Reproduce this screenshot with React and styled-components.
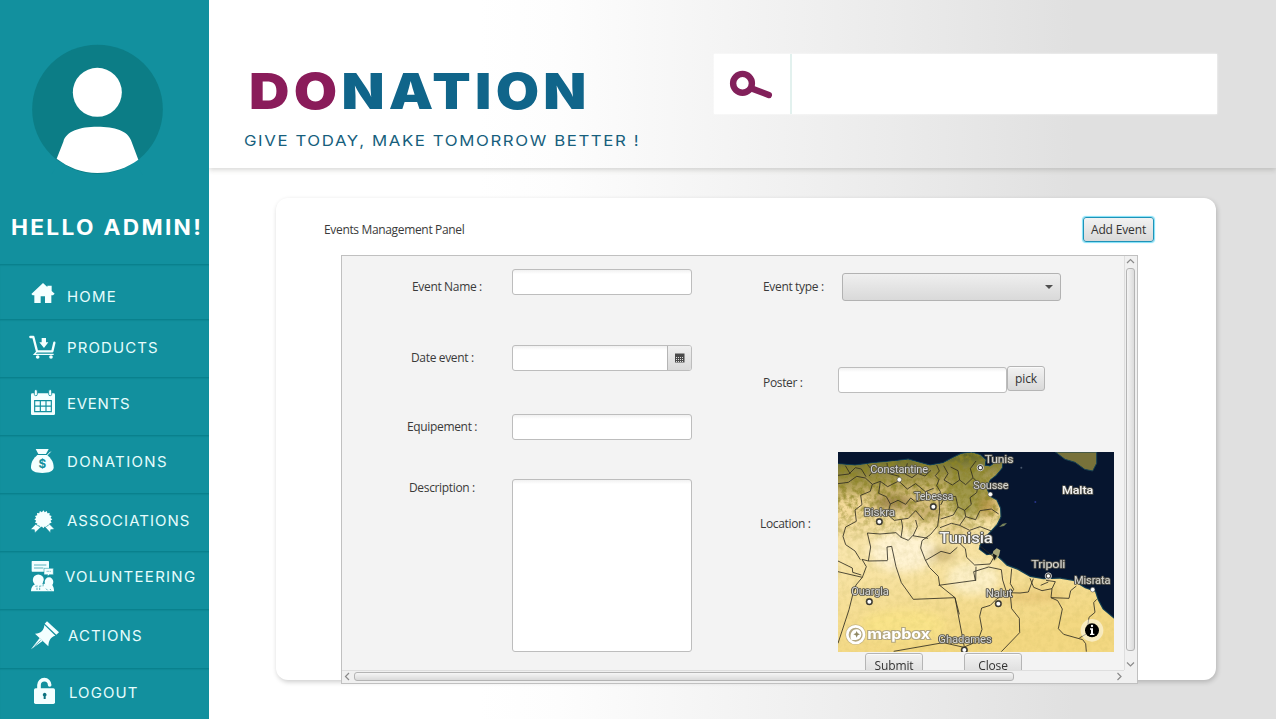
import React from "react";
import styled, { createGlobalStyle, css } from "styled-components";

const Global = createGlobalStyle`
  * { box-sizing: border-box; }
  body { margin: 0; overflow: hidden; background: #fff; }
`;

const brandFont = css`
  font-family: Inter, "Open Sans", sans-serif;
  transform-origin: 0 50%;
`;
const formFont = css`
  font-family: "Open Sans", "Noto Sans", sans-serif;
  font-size: 12px;
  letter-spacing: -0.34px;
  color: #3a3a3a;
`;

const Page = styled.div`
  display: flex;
  width: 1276px;
  height: 719px;
  overflow: hidden;
`;

/* ---------- sidebar ---------- */
const Sidebar = styled.aside`
  position: relative;
  z-index: 1;
  display: flex;
  flex-direction: column;
  flex: none;
  width: 209px;
  background: #12909e;
`;
const Profile = styled.div`
  display: flex;
  flex-direction: column;
  height: 264px;
  padding: 44px 0 0 31px;
`;
const Greeting = styled.h2`
  ${brandFont}
  width: 170px;
  margin: 40px 0 0 -20px;
  font-size: 21px;
  line-height: 26px;
  font-weight: 700;
  letter-spacing: 2.15px;
  transform: scaleX(1.08);
  color: #fff;
  white-space: nowrap;
`;
const NavItem = styled.a`
  display: flex;
  align-items: flex-start;
  flex: none;
  height: ${(p) => p.$height}px;
  box-shadow: inset 0 2px 1px -0.5px #0a818d;
  & > svg {
    flex: none;
    margin: ${(p) => p.$iconTop}px 0 0 ${(p) => p.$iconLeft}px;
  }
`;
const NavLabel = styled.span`
  ${brandFont}
  flex: none;
  margin: ${(p) => p.$top}px 0 0 ${(p) => p.$left}px;
  font-size: 14px;
  line-height: 18px;
  letter-spacing: ${(p) => p.$spacing}px;
  transform: scaleX(1.07);
  color: #e6fdfd;
  white-space: nowrap;
`;

/* ---------- main area ---------- */
const Main = styled.main`
  display: flex;
  flex-direction: column;
  flex: 1;
  background: linear-gradient(90deg, #fff 0, #fff 270px, #fdfdfd 350px, #f8f8f8 442px, #f0f0f0 592px, #e8e8e8 735px, #e0e0e0 865px);
`;
const Header = styled.header`
  display: flex;
  align-items: flex-start;
  flex: none;
  height: 168px;
  box-shadow: 0 2px 5px rgba(60, 60, 50, 0.2);
`;
const Brand = styled.div`
  ${brandFont}
  width: 505px;
  padding: 60px 0 0 35px;
  white-space: nowrap;
`;
const Title = styled.h1`
  width: 320px;
  margin: 0 0 0 5px;
  font-size: 50px;
  line-height: 62px;
  font-weight: 900;
  letter-spacing: 3.8px;
  transform: scaleX(1.12);
  transform-origin: 0 50%;
  color: #10658a;
  & > span { color: #8a1c5a; }
`;
const Tagline = styled.p`
  width: 360px;
  margin: 9px 0 0;
  font-size: 15px;
  line-height: 20px;
  letter-spacing: 1.42px;
  transform: scaleX(1.12);
  transform-origin: 0 50%;
  color: #175f7d;
`;
const Search = styled.div`
  display: flex;
  width: 503px;
  height: 60px;
  margin-top: 54px;
  background: #fff;
  box-shadow: 0 0 2px rgba(255, 255, 255, 0.9);
`;
const SearchButton = styled.div`
  width: 78px;
  height: 60px;
  padding: 15px 0 0 15px;
  border-right: 2px solid #e2f1ee;
`;

const Card = styled.section`
  display: flex;
  flex-direction: column;
  width: 940px;
  height: 482px;
  margin: 30px 0 0 67px;
  border-radius: 12px;
  background: #fff;
  box-shadow: 1px 2px 5px rgba(0, 0, 0, 0.2);
`;
const CardHeader = styled.div`
  ${formFont}
  display: flex;
  justify-content: space-between;
  align-items: center;
  flex: none;
  height: 57px;
  padding: 6px 62px 0 48px;
`;
const Button = styled.button`
  ${formFont}
  display: flex;
  align-items: center;
  justify-content: center;
  flex: none;
  width: ${(p) => p.$width}px;
  height: 25px;
  margin: 0;
  padding: 0;
  border: 1px solid ${(p) => (p.$focused ? "#1f93b8" : "#b5b5b5")};
  border-radius: 3px;
  background: linear-gradient(#f2f2f2, #d9d9d9);
  box-shadow: ${(p) => (p.$focused ? "0 0 1px 1px #7fe0f8" : "inset 0 1px 0 #fafafa")};
  letter-spacing: -0.15px;
  color: #333;
`;

/* ---------- scroll pane ---------- */
const ScrollPane = styled.div`
  display: grid;
  grid-template: 414px 13px / 782px 13px;
  flex: none;
  width: 797px;
  height: 429px;
  margin-left: 65px;
  border: 1px solid #c0c0c0;
  background: #f0f0f0;
`;
const Viewport = styled.div`
  ${formFont}
  display: flex;
  overflow: hidden;
  background: #f3f3f3;
`;
const VBar = styled.div`
  display: flex;
  flex-direction: column;
  align-items: center;
  border-left: 1px solid #dedede;
  padding: 2px 2px 3px 0;
`;
const VThumb = styled.div`
  width: 9px;
  height: 383px;
  margin: 4px 0 10px;
  border: 1px solid #b4b4b4;
  border-radius: 3px;
  background: linear-gradient(90deg, #f4f4f4, #dcdcdc);
`;
const HBar = styled.div`
  display: flex;
  align-items: center;
  border-top: 1px solid #dedede;
  padding: 0 0 2px 2px;
  & > * { flex: none; }
`;
const HThumb = styled.div`
  width: 660px;
  height: 9px;
  margin: 0 102px 0 4px;
  border: 1px solid #b4b4b4;
  border-radius: 3px;
  background: linear-gradient(#f6f6f6, #dadada);
`;

/* ---------- form ---------- */
const Column = styled.div`
  display: flex;
  flex-direction: column;
  flex: none;
  width: ${(p) => p.$width}px;
`;
const Row = styled.div`
  display: flex;
  align-items: flex-start;
  flex: none;
  height: ${(p) => p.$height}px;
  margin-top: ${(p) => p.$gap}px;
`;
const Label = styled.label`
  flex: none;
  width: ${(p) => p.$width}px;
  padding: ${(p) => p.$top}px 0 0 ${(p) => p.$indent}px;
  line-height: 16px;
  white-space: nowrap;
`;
const inputBox = css`
  border: 1px solid #bdbdbd;
  border-radius: 3px;
  background: linear-gradient(#f1f1f1 0, #fff 4px);
`;
const TextField = styled.div`
  ${inputBox}
  flex: none;
  width: ${(p) => p.$width || 180}px;
  height: ${(p) => p.$height || 26}px;
  margin-top: ${(p) => p.$top || 0}px;
`;
const DateField = styled.div`
  ${inputBox}
  display: flex;
  justify-content: flex-end;
  width: 180px;
  height: 26px;
`;
const DateButton = styled.div`
  display: flex;
  align-items: center;
  justify-content: center;
  width: 24px;
  border-left: 1px solid #b5b5b5;
  border-radius: 0 2px 2px 0;
  background: linear-gradient(#f0f0f0, #d9d9d9);
`;
const Combo = styled.div`
  display: flex;
  align-items: center;
  justify-content: flex-end;
  width: 219px;
  height: 28px;
  padding-right: 7px;
  border: 1px solid #b2b2b2;
  border-radius: 3px;
  background: linear-gradient(#efefef, #d9d9d9);
`;
const Actions = styled.div`
  display: flex;
  gap: 41px;
  margin: 1px 0 0 173px;
`;

/* ---------- icons ---------- */
const TEAL = "#12909e";
const W = "#f4ffff";

const Icon = ({ box, children }) => {
  const [, , w, h] = box.split(" ").map(Number);
  return (
    <svg viewBox={box} width={w / 3} height={h / 3} fill={W}>
      {children}
    </svg>
  );
};

const HomeIcon = () => (
  <Icon box="90 81 78 66">
    <path d="M94 117 L129 84 L142 96 V92 H155 V108 L164 116 L159 121 H154 V144 H135 V124 H122 V144 H103 V121 H98Z" />
  </Icon>
);
const CartIcon = () => (
  <Icon box="84 240 81 75">
    <path d="M88 246 H97 L108 289 H154 L160 263" fill="none" stroke={W} strokeWidth="7" strokeLinejoin="round" strokeLinecap="round" />
    <path d="M108 289 L100 298 H158" fill="none" stroke={W} strokeWidth="4" />
    <circle cx="110" cy="306" r="5.5" />
    <circle cx="150" cy="306" r="5.5" />
    <path d="M122 249 H135 V262 H142 L129 279 L115 262 H122Z" />
  </Icon>
);
const CalendarIcon = () => (
  <Icon box="90 402 78 81">
    <rect x="93" y="415" width="72" height="65" rx="4" />
    <g stroke={TEAL} strokeWidth="2.5">
      <rect x="103" y="404" width="9" height="18" rx="4" />
      <rect x="146" y="404" width="9" height="18" rx="4" />
      <path d="M104 437 H154 V470 H104Z M104 453.500 H154 M121 437 V470 M138 437 V470" fill="none" strokeWidth="3.500" />
    </g>
  </Icon>
);
const BagIcon = () => (
  <Icon box="90 579 75 78">
    <path d="M107 582 H146 L138 597 H115Z" />
    <path d="M112 600 H142 C151 609 161 619 161 637 C161 649 148 654 127 654 C106 654 93 649 93 637 C93 619 102 609 112 600Z" />
    <path d="M142 600 L152 590" stroke={W} strokeWidth="3" />
    <text x="127" y="640" fontFamily="Inter, sans-serif" fontSize="35" fontWeight="700" textAnchor="middle" fill={TEAL}>$</text>
  </Icon>
);
const burst = Array.from({ length: 32 }, (_, i) => {
  const r = i % 2 ? 22 : 27;
  const a = (i * Math.PI) / 16;
  return `${130 + r * Math.cos(a)},${103 + r * Math.sin(a)}`;
}).join(" ");
const BadgeIcon = () => (
  <Icon box="90 75 75 69">
    <polygon points={burst} />
    <path d="M107 118 L92 133 L103 134 L105 143 L122 127Z M149 118 L163 132 L152 134 L151 143 L136 127Z" stroke={TEAL} strokeWidth="1.500" />
  </Icon>
);
const VolunteerIcon = () => (
  <Icon box="90 225 75 96">
    <rect x="95" y="228" width="52" height="32" rx="2" />
    <path d="M102 240 H139 M102 249 H130" stroke={TEAL} strokeWidth="2" />
    <path d="M132 250 H160 V269 H148 L143 274 V269 H132Z" stroke={TEAL} strokeWidth="1.500" />
    <path d="M140 259 H152" stroke={TEAL} strokeWidth="2" strokeDasharray="3 2" />
    <path d="M93 319 C93 306 99 300 108 296 H152 C161 302 162 310 162 319Z" />
    <circle cx="115" cy="285" r="16.500" />
    <ellipse cx="147" cy="291" rx="13" ry="14" />
    <path d="M131 287 L129 304 M106 304 L113 303 M117 304 L124 303 M111 308 V315 M119 308 V315 M138 311 L143 316 M150 312 L153 316" stroke={TEAL} strokeWidth="2" fill="none" />
  </Icon>
);
const PinIcon = () => (
  <Icon box="90 405 90 90">
    <path d="M141 409 L177 442 L169 449 L134 416Z" />
    <path d="M133 420 L166 452 C151 456 146 467 145 484 L105 446 C123 445 132 436 133 420Z" />
    <path d="M119 459 L128 468 L93 493Z" />
    <path d="M122 466 L103 484" stroke={TEAL} strokeWidth="2" />
  </Icon>
);
const LockIcon = () => (
  <Icon box="99 576 69 84">
    <rect x="102" y="610" width="63" height="47" rx="5" />
    <path d="M117 612 V600 A16 16 0 0 1 149 600" fill="none" stroke={W} strokeWidth="11" strokeLinecap="round" />
    <path d="M134 623 a6 6 0 0 1 3 11 V642 H131 V634 a6 6 0 0 1 3 -11Z" fill="#0d7380" />
  </Icon>
);

const Avatar = () => (
  <svg width="133" height="131" viewBox="93 132 399 393">
    <ellipse cx="292.500" cy="328" rx="196" ry="194" fill="#0c7d86" />
    <path d="M180 484 C215 510 250 523 292 523 C340 523 375 508 405 484 L430 530 H150Z" fill="#12909e" />
    <circle cx="292" cy="277" r="73.500" fill="#fff" />
    <path d="M170 476 L190 425 C198 393 240 380 292 380 C344 380 384 393 393 421 L415 479 C380 504 340 519 292 519 C245 519 205 502 170 476Z" fill="#fff" />
  </svg>
);

const SearchIcon = () => (
  <svg width="45" height="32" viewBox="729 69 45 32" fill="none" stroke="#82205a">
    <circle cx="742.500" cy="83.300" r="9.400" strokeWidth="6.400" />
    <path d="M753 89 L768.800 95" strokeWidth="6.400" strokeLinecap="round" />
  </svg>
);

const paths = {
  up: "M1 5 L4.500 1.500 L8 5",
  down: "M1 1.500 L4.500 5 L8 1.500",
  left: "M5 1 L1.500 4.500 L5 8",
  right: "M1.500 1 L5 4.500 L1.500 8",
};
const Arrow = ({ dir }) => {
  const vertical = dir === "up" || dir === "down";
  return (
    <svg width={vertical ? 9 : 6} height={vertical ? 6 : 9} fill="none" stroke="#8a8a8a" strokeWidth="1.200">
      <path d={paths[dir]} />
    </svg>
  );
};

/* ---------- map ---------- */
const cities = [
  ["Tunis", 464, 53, 86, 33],
  ["Constantine", 121, 84, 173, 30],
  ["Sousse", 430, 131, 105, 30],
  ["Tebessa", 252, 166, 118, 30],
  ["Biskra", 101, 213, 94, 30],
  ["Malta", 696, 146, 93, 35],
  ["Tunisia", 328, 293, 160, 42],
  ["Tripoli", 604, 370, 102, 35],
  ["Misrata", 732, 416, 109, 30],
  ["Ouargla", 64, 450, 112, 30],
  ["Nalut", 467, 457, 80, 30],
  ["Ghadames", 325, 595, 160, 30],
];
const solidDots = [[208, 104], [481, 148], [788, 434]];
const ringDots = [[310, 185], [148, 230], [118, 470], [505, 476], [403, 615]];
const capitals = [[451, 68], [655, 393]];
const land =
  "M24 58 L75 62 L130 55 L195 49 L235 44 L262 52 L300 62 L340 55 L368 40 L395 27 L425 23 L450 31 L466 45 L463 62 L480 65 L500 51 L516 52 L515 68 L497 90 L479 104 L468 128 L478 155 L499 166 L510 190 L511 215 L500 238 L478 262 L458 283 L449 300 L446 313 L470 331 L493 328 L515 347 L530 362 L562 374 L600 396 L640 403 L690 401 L730 408 L765 430 L795 440 L803 465 L818 493 L852 521 V621 H24Z";
const borders = [
  "M320 60 L328 78 L316 92 L327 104 L320 122 L331 140 L327 164 L329 198 L323 243 L302 268 L276 287 L272 309 L286 345 L298 367 L325 394 L329 421 L375 458 L403 606",
  "M112 264 L150 267 L198 263 L213 277 L218 246 L214 224 M213 277 L235 286 L248 272 L294 280 M112 264 L122 306 L115 348 L173 347 M115 348 L96 343 L109 365 L97 397 L78 420 L68 450 L57 494 L24 595",
  "M185 304 L198 365 L214 413 L250 463 L375 458 M173 345 L171 306 L185 304",
  "M24 116 L55 112 L80 94 L106 99 L127 118 L151 109 L173 125 L206 108 L232 132 L257 116 L286 140 L311 130",
  "M24 91 L57 87 L76 68 L94 72 L108 95 M127 118 L121 139 L92 151 L96 179 L75 195 L79 229 L47 246 L39 274 L47 299 L75 318 L91 344",
  "M151 109 L146 145 L169 155 L181 177 L204 166 L227 178 L242 159 L257 171 L281 164 M181 177 L173 209 L193 226 L235 220 L257 197 L281 225 M257 225 L262 245 L249 273",
  "M24 380 L97 397 M24 348 L67 369 L68 382 L94 390",
  "M341 62 L354 86 L342 105 L367 120 L389 105 L407 119 L429 98 L421 71 L438 48 M389 105 L384 77 L362 66 M429 98 L446 115 L440 143 L420 158 L424 178 L404 196 L384 186 L377 154 L344 158 L332 180 M404 196 L407 215 L437 224 L450 197 L484 192 L506 207",
  "M384 186 L370 210 L332 222 M407 215 L389 241 L419 256 L450 245 L484 258 M389 241 L364 235 L330 248 M389 295 L406 311 L410 337 L434 360 L480 357 L492 336 L449 302",
  "M287 346 L333 319 L360 326 L382 307 M326 421 L436 406 L431 380 L476 366 L514 374 L518 405 L530 443 L570 444 L595 441 L610 401 M438 365 L437 408",
  "M545 371 L541 416 L551 433 L541 449 L545 491 L568 520 L569 563 L514 620",
  "M530 443 L500 462 L481 481 L455 489 L449 514 L456 553 L443 589 L405 605",
  "M600 400 L611 427 L636 437 L666 431 L676 410 L648 406 M666 431 L663 458 L717 460 L722 437 L739 423 M663 458 L683 467 L697 492 L685 551 L701 568 L758 584 L767 596 L769 620",
  "M800 463 L791 473 L795 502 L777 517 L773 543 L786 561 M748 579 L786 557 M632 421 L655 411",
  "M191 619 L340 593 L402 607 M375 458 L388 508",
  "M112 58 L129 79 L117 93 M232 55 L224 86 L246 98 L263 85 L285 93 L303 76 M46 62 L61 87 M171 54 L174 85 L208 94",
];

const MapView = () => (
  <svg width="276" height="200" viewBox="24 21 828 600">
    <defs>
      <linearGradient id="sand" x1="0" y1="0" x2="0.250" y2="1">
        <stop offset="0" stopColor="#8b8544" />
        <stop offset="0.130" stopColor="#b8a55d" />
        <stop offset="0.260" stopColor="#edd492" />
        <stop offset="0.480" stopColor="#f9e6ac" />
        <stop offset="1" stopColor="#f3d882" />
      </linearGradient>
      <linearGradient id="north" x1="0" y1="0" x2="0" y2="1">
        <stop offset="0" stopColor="#555f22" stopOpacity="0.950" />
        <stop offset="1" stopColor="#a8903f" stopOpacity="0" />
      </linearGradient>
      <filter id="soft" x="-40%" y="-40%" width="180%" height="180%"><feGaussianBlur stdDeviation="14" /></filter>
      <filter id="rough" x="0" y="0" width="100%" height="100%">
        <feTurbulence type="fractalNoise" baseFrequency="0.060" numOctaves="4" seed="4" />
        <feColorMatrix values="0 0 0 0 0.260  0 0 0 0 0.230  0 0 0 0 0.020  2.800 0 0 0 -1.100" />
      </filter>
      <linearGradient id="fade" x1="0" y1="0" x2="0" y2="1">
        <stop offset="0" stopColor="#fff" />
        <stop offset="0.280" stopColor="#aaa" />
        <stop offset="0.450" stopColor="#1c1c1c" />
        <stop offset="1" stopColor="#101010" />
      </linearGradient>
      <mask id="fadeMask"><rect x="24" y="21" width="828" height="600" fill="url(#fade)" /></mask>
      <clipPath id="landClip"><path d={land} /></clipPath>
    </defs>
    <rect x="24" y="21" width="828" height="600" fill="#06152f" />
    <path d="M676 21 H800 V55 L788 78 L764 73 L735 52 L705 43Z" fill="#78723a" stroke="#174153" strokeWidth="3" />
    <path d={land} fill="none" stroke="#1a5364" strokeWidth="7" opacity="0.700" />
    <path d={land} fill="url(#sand)" />
    <g clipPath="url(#landClip)">
      <rect x="24" y="21" width="500" height="165" fill="url(#north)" />
      <g filter="url(#soft)">
        <ellipse cx="190" cy="172" rx="60" ry="20" fill="#765b28" opacity="0.700" />
        <ellipse cx="290" cy="200" rx="55" ry="28" fill="#a58a48" opacity="0.550" />
        <ellipse cx="415" cy="145" rx="65" ry="75" fill="#8e8a3a" opacity="0.750" />
        <ellipse cx="60" cy="185" rx="65" ry="30" fill="#f6dc9c" opacity="0.900" />
        <ellipse cx="220" cy="320" rx="100" ry="60" fill="#fff3d2" />
        <ellipse cx="385" cy="255" rx="50" ry="20" fill="#dcc078" opacity="0.600" />
        <ellipse cx="335" cy="328" rx="40" ry="15" fill="#b89e60" opacity="0.800" />
        <ellipse cx="430" cy="400" rx="80" ry="50" fill="#fdf0c6" />
        <ellipse cx="610" cy="455" rx="95" ry="14" fill="#e0b566" opacity="0.600" />
        <ellipse cx="220" cy="540" rx="130" ry="45" fill="#f9e389" />
        <ellipse cx="475" cy="185" rx="28" ry="32" fill="#b18937" opacity="0.700" />
      </g>
      <rect x="24" y="21" width="828" height="600" filter="url(#rough)" mask="url(#fadeMask)" />
    </g>
    <path d="M490 318 L500 310 L511 316 L507 332 L497 345 L486 333Z" fill="#aaa97a" />
    <path d="M488 325 L501 332 L492 347Z" fill="#161b18" />
    <path d="M507 246 L518 236 L531 234 L522 243Z" fill="#77825b" />
    <circle cx="574" cy="68" r="3" fill="#47566b" />
    <circle cx="616" cy="171" r="3" fill="#27348a" />
    <g fill="none" stroke="#2e2b20" strokeWidth="2.500" strokeLinejoin="round">
      {borders.map((d, i) => <path key={i} d={d} />)}
    </g>
    <g fill="#fff" stroke="#3a3932" strokeWidth="1.500">
      {solidDots.map(([x, y]) => <circle key={x} cx={x} cy={y} r="7" />)}
      {ringDots.map(([x, y]) => (
        <g key={x}>
          <circle cx={x} cy={y} r="10" fill="#3a3932" />
          <circle cx={x} cy={y} r="6" stroke="none" />
        </g>
      ))}
      {capitals.map(([x, y]) => (
        <g key={x}>
          <circle cx={x} cy={y} r="9.500" fill="#3a3932" strokeWidth="2.500" stroke="#e5e5e5" />
          <circle cx={x} cy={y} r="5" stroke="none" />
        </g>
      ))}
    </g>
    <g fontFamily="Roboto, sans-serif" fontWeight="400" stroke="#55534a" strokeWidth="5" strokeLinejoin="round" paintOrder="stroke">
      {cities.map(([name, x, y, w, size]) => (
        <text
          key={name}
          x={x}
          y={y}
          textLength={w}
          lengthAdjust="spacingAndGlyphs"
          fontSize={size}
          fontWeight={name === "Tunisia" || name === "Malta" ? 500 : 400}
          fill={name === "Tunisia" || name === "Malta" ? "#f3f3f3" : "#d6d6d2"}
        >
          {name}
        </text>
      ))}
    </g>
    <g>
      <circle cx="77" cy="569" r="31" fill="#b3a780" opacity="0.700" />
      <circle cx="77" cy="569" r="25" fill="#b3a780" stroke="#fff" strokeWidth="8" />
      <path d="M63 584 C58 565 68 551 82 553 C96 556 98 573 88 581 C80 586 72 585 63 584Z" fill="#fff" />
      <path d="M80 558 L83 565 L90 568 L83 571 L80 578 L77 571 L70 568 L77 565Z" fill="#8f8763" />
      <text x="112" y="581" fontFamily="Inter, sans-serif" fontSize="42" fontWeight="700" textLength="188" lengthAdjust="spacingAndGlyphs" fill="#fff" stroke="#b3a780" strokeWidth="6" paintOrder="stroke">mapbox</text>
    </g>
    <circle cx="786" cy="556" r="34" fill="#fff" opacity="0.500" />
    <circle cx="786" cy="556" r="21" fill="#000" />
    <path d="M780 550 H789 V566 H793 V570 H780 V566 H783 V554 H780Z" fill="#fff" />
    <circle cx="786" cy="543" r="3.500" fill="#fff" />
  </svg>
);

const nav = [
  { text: "HOME", icon: HomeIcon, height: 55, ix: 30, iy: 18, iw: 26, tx: 67, ty: 24, ls: 1.1 },
  { text: "PRODUCTS", icon: CartIcon, height: 58, ix: 28.5, iy: 16, iw: 27, tx: 67, ty: 20, ls: 1.03 },
  { text: "EVENTS", icon: CalendarIcon, height: 58, ix: 30, iy: 12, iw: 26, tx: 67, ty: 18, ls: 0.7 },
  { text: "DONATIONS", icon: BagIcon, height: 58, ix: 30, iy: 13, iw: 25, tx: 67, ty: 18, ls: 1.28 },
  { text: "ASSOCIATIONS", icon: BadgeIcon, height: 58, ix: 30, iy: 17, iw: 25, tx: 67, ty: 19, ls: 0.96 },
  { text: "VOLUNTEERING", icon: VolunteerIcon, height: 58, ix: 30, iy: 9, iw: 25, tx: 65, ty: 17, ls: 1.2 },
  { text: "ACTIONS", icon: PinIcon, height: 59, ix: 30, iy: 11, iw: 30, tx: 68, ty: 18, ls: 1.05 },
  { text: "LOGOUT", icon: LockIcon, height: 51, ix: 33, iy: 9, iw: 23, tx: 69, ty: 16, ls: 1 },
];

export default function App() {
  return (
    <Page>
      <Global />
      <Sidebar>
        <Profile>
          <Avatar />
          <Greeting>HELLO ADMIN!</Greeting>
        </Profile>
        {nav.map(({ text, icon: Glyph, height, ix, iy, iw, tx, ty, ls }) => (
          <NavItem key={text} $height={height} $iconTop={iy} $iconLeft={ix}>
            <Glyph />
            <NavLabel $top={ty} $left={tx - ix - iw} $spacing={ls}>{text}</NavLabel>
          </NavItem>
        ))}
      </Sidebar>
      <Main>
        <Header>
          <Brand>
            <Title><span>DO</span>NATION</Title>
            <Tagline>GIVE TODAY, MAKE TOMORROW BETTER !</Tagline>
          </Brand>
          <Search>
            <SearchButton><SearchIcon /></SearchButton>
          </Search>
        </Header>
        <Card>
          <CardHeader>
            <span>Events Management Panel</span>
            <Button $width={71} $focused>Add Event</Button>
          </CardHeader>
          <ScrollPane>
            <Viewport>
              <Column $width={350}>
                <Row $gap={13} $height={26}>
                  <Label $width={170} $top={10} $indent={70}>Event Name :</Label>
                  <TextField />
                </Row>
                <Row $gap={50} $height={26}>
                  <Label $width={170} $top={5} $indent={69}>Date event :</Label>
                  <DateField>
                    <DateButton>
                      <svg width="10" height="10" viewBox="0 0 10 10">
                        <rect y="0.500" width="9.500" height="9" fill="#4a4a4a" />
                        <path d="M1 4.500 H9 M1 6.500 H9 M1 8.500 H9" stroke="#ddd" strokeDasharray="1 1" />
                      </svg>
                    </DateButton>
                  </DateField>
                </Row>
                <Row $gap={43} $height={26}>
                  <Label $width={170} $top={5} $indent={65}>Equipement :</Label>
                  <TextField />
                </Row>
                <Row $gap={39} $height={173}>
                  <Label $width={170} $top={1} $indent={67}>Description :</Label>
                  <TextField $height={173} />
                </Row>
              </Column>
              <Column $width={432}>
                <Row $gap={17} $height={28}>
                  <Label $width={150} $top={6} $indent={71}>Event type :</Label>
                  <Combo>
                    <svg width="8" height="4"><path d="M0 0 H8 L4 4Z" fill="#505050" /></svg>
                  </Combo>
                </Row>
                <Row $gap={65} $height={27}>
                  <Label $width={146} $top={9} $indent={71}>Poster :</Label>
                  <TextField $width={169} $top={1} />
                  <Button $width={38}>pick</Button>
                </Row>
                <Row $gap={59} $height={200}>
                  <Label $width={146} $top={64} $indent={68}>Location :</Label>
                  <MapView />
                </Row>
                <Actions>
                  <Button $width={58}>Submit</Button>
                  <Button $width={58}>Close</Button>
                </Actions>
              </Column>
            </Viewport>
            <VBar>
              <Arrow dir="up" />
              <VThumb />
              <Arrow dir="down" />
            </VBar>
            <HBar>
              <Arrow dir="left" />
              <HThumb />
              <Arrow dir="right" />
            </HBar>
          </ScrollPane>
        </Card>
      </Main>
    </Page>
  );
}
